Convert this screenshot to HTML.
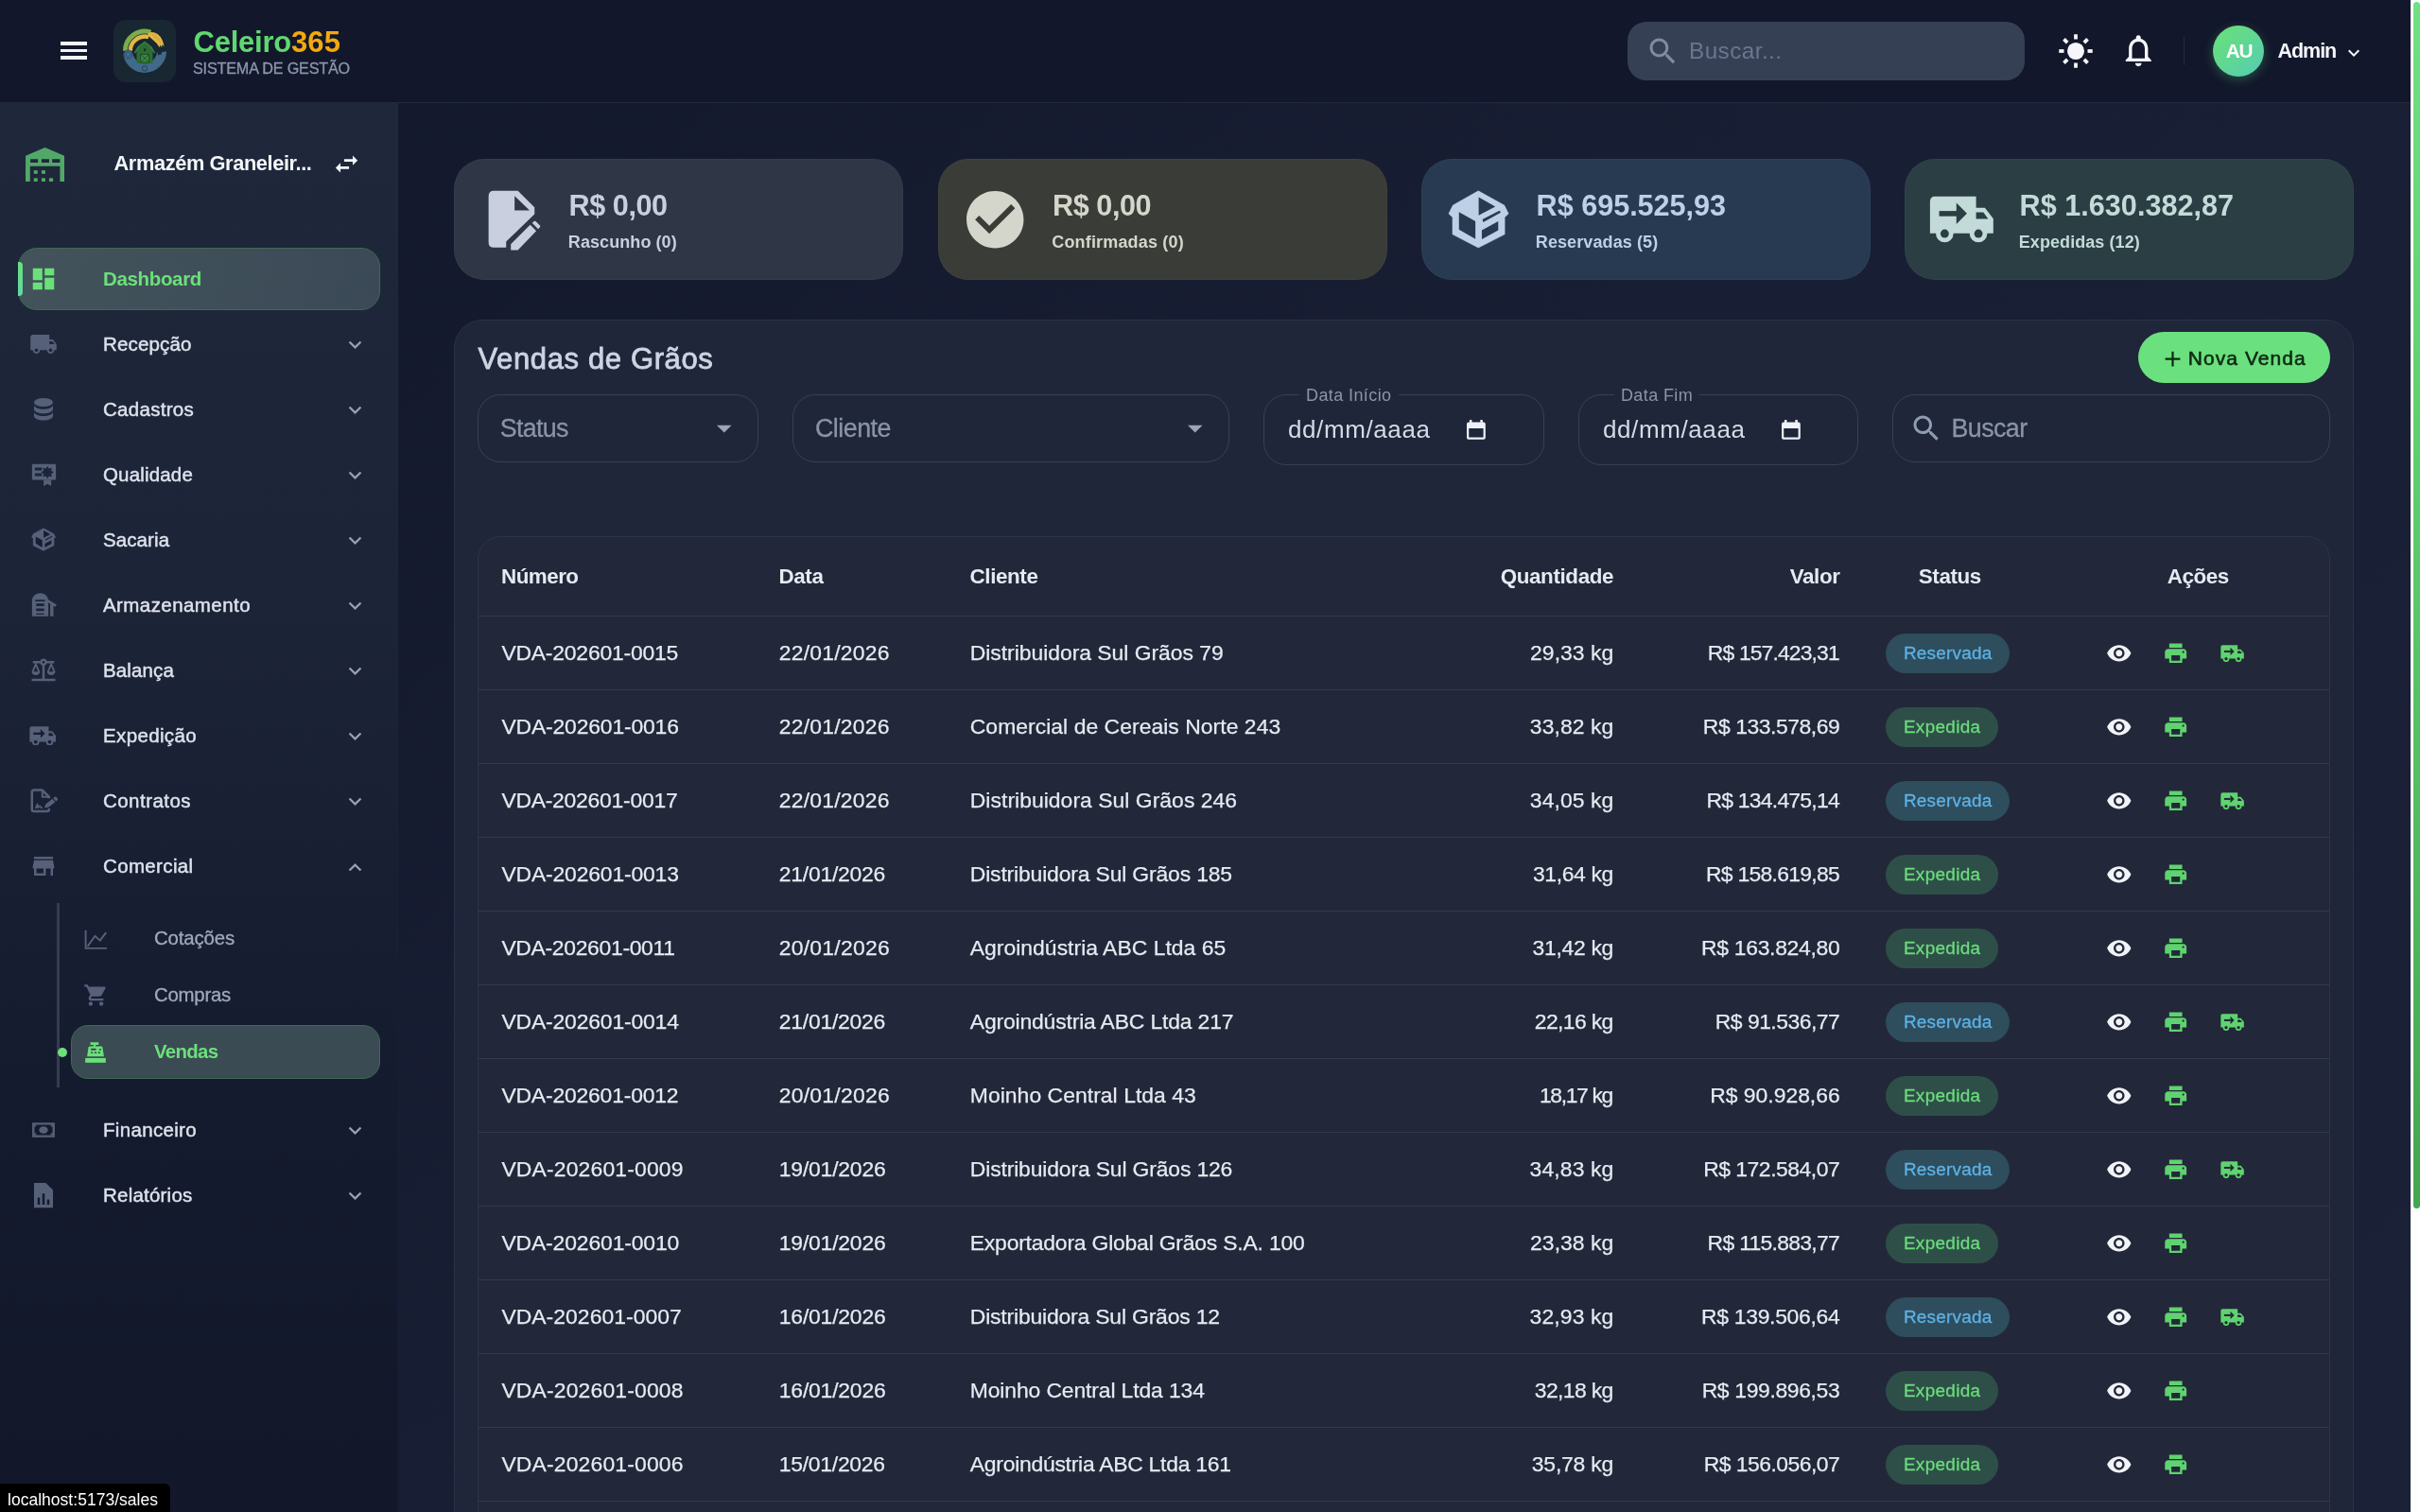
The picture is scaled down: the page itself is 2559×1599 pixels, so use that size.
<!DOCTYPE html><html><head><meta charset="utf-8"><title>Celeiro365</title><style>
*{box-sizing:border-box;margin:0;padding:0}
html,body{width:2559px;height:1599px;overflow:hidden;background:#141a2e}
body{font-family:"Liberation Sans",sans-serif;position:relative}
.t{display:block}
#root{position:absolute;left:0;top:0;width:2559px;height:1599px;overflow:hidden;will-change:transform}
</style></head><body><div id="root">
<div style="position:absolute;left:0px;top:0px;width:2549px;height:1599px;background:linear-gradient(135deg,#12172b 0%,#181e33 50%,#1b2136 100%);"></div>
<div style="position:absolute;left:0px;top:0px;width:2549px;height:108px;background:#12172b;"></div>
<div style="position:absolute;left:421px;top:108px;width:2128px;height:1px;background:#222a3d;"></div>
<div style="position:absolute;left:0px;top:108px;width:421px;height:1491px;background:linear-gradient(180deg,#1f283b 0%,#1c2438 35%,#151b2e 70%,#12172a 100%);border-right:1px solid rgba(255,255,255,.012);"></div>
<div style="position:absolute;left:63.8px;top:44.2px;width:28.3px;height:3.8px;background:#f1f3f8;"></div>
<div style="position:absolute;left:63.8px;top:51.6px;width:28.3px;height:3.8px;background:#f1f3f8;"></div>
<div style="position:absolute;left:63.8px;top:59.1px;width:28.3px;height:3.8px;background:#f1f3f8;"></div>
<div style="position:absolute;left:120px;top:21px;width:66px;height:66px;background:#182731;border-radius:13px;"></div>
<svg style="position:absolute;left:120.00px;top:21.00px;" width="66" height="66" viewBox="0 0 66 66"><path d="M51.09 33.43 A18.1 18.1 0 0 1 15.17 35.94" fill="none" stroke="#41698a" stroke-width="10" stroke-linecap="butt"/><path d="M44 33 l2.500 1.200 .8 3.500 1.800-1.500 .9 1.300 1.300-3.500 2.500-.6 0-3z" fill="#182731"/><path d="M12.40 32.80 A20.6 20.6 0 0 1 39.37 13.21" fill="none" stroke="#7cab4a" stroke-width="5" stroke-linecap="butt"/><path d="M17.80 32.80 A15.2 15.2 0 0 1 37.19 18.19" fill="none" stroke="#e2b843" stroke-width="4.3" stroke-linecap="butt"/><path d="M36.300 14.200 Q41 11.300 47 15.200 Q52.300 19.500 53.600 28.600 L51.600 26 L51 29.300 L49.300 26.600 L48.600 29.200 Q46 24.200 41.700 21.200 Q39.500 19.500 37.300 17.600 Z" fill="#e2b843"/><path d="M40.500 14.500 l4 5.500 M44 15.500 l3.300 6.500 M47.500 18.500 l2.300 6.500" stroke="#b8902c" stroke-width=".5" fill="none"/><path d="M24.500 45.700 V33 q0-2.500 2-4.500 l6.500-4.700 6.500 4.700 q2 2 2 4.500 V45.700 l-8.500 1.200z" fill="#2d6b35"/><path d="M22.500 35.200 l4-6.700 6.500-5 6.500 5 4 6.700" fill="none" stroke="#3b8342" stroke-width="1.500" stroke-linejoin="round"/><rect x="28.700" y="36.400" width="8.800" height="8.600" fill="#3b8a44" stroke="#1d4a24" stroke-width=".9"/><path d="M28.700 36.400 l8.800 8.600 M37.500 36.400 l-8.800 8.600" stroke="#1d4a24" stroke-width=".9"/><rect x="32" y="30.300" width="2.200" height="2.600" rx=".6" fill="#16321b"/><circle cx="15.400" cy="36.400" r="4.400" fill="#41698a" stroke="#29475f" stroke-width=".9"/><circle cx="15.400" cy="36.400" r="2.100" fill="#4d7799" stroke="#29475f" stroke-width=".8"/><circle cx="33" cy="51.400" r="2.700" fill="#41698a" stroke="#1f3a4e" stroke-width=".9"/></svg>
<span id="logo1" class="t" style="position:absolute;top:24.80px;font-size:31px;line-height:40px;color:#5fd870;font-weight:700;white-space:nowrap;letter-spacing:-0.230px;left:204.5px;">Celeiro</span>
<span id="logo2" class="t" style="position:absolute;top:24.80px;font-size:31px;line-height:40px;color:#f2a90f;font-weight:700;white-space:nowrap;letter-spacing:0.089px;left:308px;">365</span>
<span id="logosub" class="t" style="position:absolute;top:61.50px;font-size:16.2px;line-height:21px;color:#8c97ae;font-weight:400;white-space:nowrap;letter-spacing:-0.183px;-webkit-text-stroke:0.3px #8c97ae;left:204px;">SISTEMA DE GESTÃO</span>
<div style="position:absolute;left:1721px;top:23px;width:420px;height:62px;background:#364055;border-radius:20px;"></div>
<svg style="position:absolute;left:1739.55px;top:35.55px;" width="36.5" height="36.5" viewBox="0 0 24 24" fill="#7f8ba2"><path d="M15.5 14h-.79l-.28-.27C15.41 12.59 16 11.11 16 9.5 16 5.91 13.09 3 9.5 3S3 5.91 3 9.5 5.91 16 9.5 16c1.61 0 3.09-.59 4.23-1.57l.27.28v.79l5 4.99L20.49 19l-4.99-5zm-6 0C7.01 14 5 11.99 5 9.5S7.01 5 9.5 5 14 7.01 14 9.5 11.99 14 9.5 14z"/></svg>
<span id="hsearch" class="t" style="position:absolute;top:37.50px;font-size:24.3px;line-height:32px;color:#6a768e;font-weight:400;white-space:nowrap;letter-spacing:0.441px;left:1786px;">Buscar...</span>
<svg style="position:absolute;left:2176.30px;top:34.80px;" width="38" height="38" viewBox="0 0 24 24"><g fill="#f4f6fa"><circle cx="12" cy="12" r="5.700"/><rect x="10.800" y="0.800" width="2.400" height="3.300" transform="rotate(0 12 12)"/><rect x="10.800" y="0.800" width="2.400" height="3.300" transform="rotate(45 12 12)"/><rect x="10.800" y="0.800" width="2.400" height="3.300" transform="rotate(90 12 12)"/><rect x="10.800" y="0.800" width="2.400" height="3.300" transform="rotate(135 12 12)"/><rect x="10.800" y="0.800" width="2.400" height="3.300" transform="rotate(180 12 12)"/><rect x="10.800" y="0.800" width="2.400" height="3.300" transform="rotate(225 12 12)"/><rect x="10.800" y="0.800" width="2.400" height="3.300" transform="rotate(270 12 12)"/><rect x="10.800" y="0.800" width="2.400" height="3.300" transform="rotate(315 12 12)"/></g></svg>
<svg style="position:absolute;left:2241.05px;top:33.35px;" width="40.5" height="40.5" viewBox="0 0 24 24" fill="#f4f6fa"><path d="M12 22c1.1 0 2-.9 2-2h-4c0 1.1.9 2 2 2zm6-6v-5c0-3.07-1.63-5.64-4.5-6.32V4c0-.83-.67-1.5-1.5-1.5s-1.5.67-1.5 1.5v.68C7.64 5.36 6 7.92 6 11v5l-2 2v1h16v-1l-2-2zm-2 1H8v-6c0-2.48 1.51-4.5 4-4.5s4 2.02 4 4.5v6z"/></svg>
<div style="position:absolute;left:2309px;top:39px;width:1px;height:30px;background:#262d41;"></div>
<div style="position:absolute;left:2339.5px;top:27px;width:54px;height:54px;border-radius:50%;background:linear-gradient(135deg,#6be07a 0%,#62d98c 40%,#54ccb4 100%);box-shadow:0 3px 12px rgba(90,220,140,.3);"></div>
<span id="au" class="t" style="position:absolute;top:40.30px;font-size:20.8px;line-height:27px;color:#ffffff;font-weight:700;white-space:nowrap;letter-spacing:-1.323px;left:2368.2px;transform:translateX(-50%);margin-left:-0.66px;">AU</span>
<span id="admin" class="t" style="position:absolute;top:39.60px;font-size:21.5px;line-height:28px;color:#f4f6fa;font-weight:700;white-space:nowrap;letter-spacing:-1.038px;left:2408.5px;">Admin</span>
<svg style="position:absolute;left:2476.50px;top:43.50px;" width="24" height="24" viewBox="0 0 24 24" fill="#f4f6fa"><path d="M16.59 8.59 12 13.17 7.41 8.59 6 10l6 6 6-6z"/></svg>
<svg style="position:absolute;left:27.25px;top:155.90px;" width="41.2" height="36" viewBox="0 0 226 198"><path fill="#52a869" fill-rule="evenodd" d="M0 48L113 0l113 48v150h-26v-90H26v90H0zM28 68v20h44V68zm65 0v20h44V68zm62 0v20h45V68z"/><g fill="#52a869"><rect x="48" y="133" width="22" height="20"/><rect x="93" y="133" width="22" height="20"/><rect x="48" y="178" width="22" height="20"/><rect x="93" y="178" width="22" height="20"/><rect x="137" y="178" width="23" height="20"/></g></svg>
<span id="wh" class="t" style="position:absolute;top:158.90px;font-size:21.8px;line-height:28px;color:#f4f6fa;font-weight:700;white-space:nowrap;letter-spacing:-0.394px;left:120.5px;">Armazém Graneleir...</span>
<svg style="position:absolute;left:350.50px;top:158.00px;" width="31" height="31" viewBox="0 0 24 24" fill="#f4f6fa"><path d="M6.99 11 3 15l3.99 4v-3H14v-2H6.99v-3zM21 9l-3.99-4v3H10v2h7.01v3L21 9z"/></svg>
<div style="position:absolute;left:24px;top:240px;width:376px;height:1px;background:rgba(255,255,255,.012);"></div>
<div style="position:absolute;left:18.5px;top:262px;width:383.5px;height:65.5px;background:linear-gradient(100deg,#42535b 0%,#3f4f59 50%,#3b4957 100%);border:1px solid #3f6853;border-radius:20px;"></div>
<div style="position:absolute;left:18.5px;top:277px;width:5px;height:36px;background:linear-gradient(180deg,#6be07a,#5fd8a8);border-radius:0 4px 4px 0;"></div>
<svg style="position:absolute;left:30.50px;top:280.00px;" width="30" height="30" viewBox="0 0 24 24" fill="#6be07a"><path d="M3 13h8V3H3v10zm0 8h8v-6H3v6zm10 0h8V11h-8v10zm0-18v6h8V3h-8z"/></svg>
<span id="m_dash" class="t" style="position:absolute;top:280.50px;font-size:20.5px;line-height:27px;color:#6be07a;font-weight:700;white-space:nowrap;letter-spacing:-0.342px;left:109px;">Dashboard</span>
<svg style="position:absolute;left:30.50px;top:349.00px;" width="30" height="30" viewBox="0 0 24 24" fill="#566079"><path d="M20 8h-3V4H3c-1.1 0-2 .9-2 2v11h2c0 1.66 1.34 3 3 3s3-1.34 3-3h6c0 1.66 1.34 3 3 3s3-1.34 3-3h2v-5l-3-4zM6 18.5c-.83 0-1.5-.67-1.5-1.5s.67-1.5 1.5-1.5 1.5.67 1.5 1.5-.67 1.5-1.5 1.5zm13.5-9 1.96 2.5H17V9.5h2.5zm-1.5 9c-.83 0-1.5-.67-1.5-1.5s.67-1.5 1.5-1.5 1.5.67 1.5 1.5-.67 1.5-1.5 1.5z"/></svg>
<span id="m_Recepção" class="t" style="position:absolute;top:349.50px;font-size:20.5px;line-height:27px;color:#dde2ec;font-weight:400;white-space:nowrap;letter-spacing:0.148px;-webkit-text-stroke:0.45px #dde2ec;left:109px;">Recepção</span>
<svg style="position:absolute;left:362.10px;top:351.20px;" width="27" height="27" viewBox="0 0 24 24" fill="#97a1b6"><path d="M16.59 8.59 12 13.17 7.41 8.59 6 10l6 6 6-6z"/></svg>
<svg style="position:absolute;left:30.50px;top:418.00px;" width="30" height="30" viewBox="0 0 24 24"><g fill="#566079"><ellipse cx="12" cy="6" rx="8" ry="3.6"/><path d="M4 8.2v3.6c0 2 3.6 3.6 8 3.6s8-1.6 8-3.6V8.2c0 2-3.6 3.6-8 3.6S4 10.200 4 8.200z"/><path d="M4 14v3.600c0 2 3.600 3.600 8 3.600s8-1.600 8-3.600V14c0 2-3.600 3.600-8 3.600S4 16 4 14z"/></g></svg>
<span id="m_Cadastros" class="t" style="position:absolute;top:418.50px;font-size:20.5px;line-height:27px;color:#dde2ec;font-weight:400;white-space:nowrap;letter-spacing:0.285px;-webkit-text-stroke:0.45px #dde2ec;left:109px;">Cadastros</span>
<svg style="position:absolute;left:362.10px;top:420.20px;" width="27" height="27" viewBox="0 0 24 24" fill="#97a1b6"><path d="M16.59 8.59 12 13.17 7.41 8.59 6 10l6 6 6-6z"/></svg>
<svg style="position:absolute;left:30.50px;top:487.00px;" width="30" height="30" viewBox="0 0 24 24"><g fill="#566079"><path fill-rule="evenodd" d="M3.300 2.900h18.200q1 0 1 1v11.400q0 1-1 1H3.300q-1 0-1-1V3.900q0-1 1-1zM4.700 6h5.900v2.300H4.700zM4.700 10.700h5.900v2.400H4.700zM15.30 4.70L16.64 6.77L19.05 6.25L18.53 8.66L20.60 10.00L18.53 11.34L19.05 13.75L16.64 13.23L15.30 15.30L13.96 13.23L11.55 13.75L12.07 11.34L10.00 10.00L12.07 8.66L11.55 6.25L13.96 6.77z"/><path d="M12.100 16.300V21.600L15.300 19.700L18.500 21.600V16.300z"/></g></svg>
<span id="m_Qualidade" class="t" style="position:absolute;top:487.50px;font-size:20.5px;line-height:27px;color:#dde2ec;font-weight:400;white-space:nowrap;letter-spacing:0.170px;-webkit-text-stroke:0.45px #dde2ec;left:109px;">Qualidade</span>
<svg style="position:absolute;left:362.10px;top:489.20px;" width="27" height="27" viewBox="0 0 24 24" fill="#97a1b6"><path d="M16.59 8.59 12 13.17 7.41 8.59 6 10l6 6 6-6z"/></svg>
<svg style="position:absolute;left:32.80px;top:558.20px" width="26.2" height="25" viewBox="0 0 525 500"><path d="M260 7L482 130L518 202L485 232V378L260 492L40 378V232L7 202L43 130z" fill="#566079" stroke="#566079" stroke-width="4" stroke-linejoin="round"/><g fill="#181e32"><path d="M263 60V215L405 142z"/><path d="M295 250L440 175L452 192L302 275z"/><path d="M95 188L235 267V418L95 337z"/><path d="M290 342L430 267V342L290 420z"/></g></svg>
<span id="m_Sacaria" class="t" style="position:absolute;top:556.50px;font-size:20.5px;line-height:27px;color:#dde2ec;font-weight:400;white-space:nowrap;letter-spacing:0.098px;-webkit-text-stroke:0.45px #dde2ec;left:109px;">Sacaria</span>
<svg style="position:absolute;left:362.10px;top:558.20px;" width="27" height="27" viewBox="0 0 24 24" fill="#97a1b6"><path d="M16.59 8.59 12 13.17 7.41 8.59 6 10l6 6 6-6z"/></svg>
<svg style="position:absolute;left:30.50px;top:625.00px;" width="30" height="30" viewBox="0 0 24 24"><g fill="#566079"><path fill-rule="evenodd" d="M2.300 21.300V8.500c0-4 3-6.800 6.900-6.800s6.900 2.800 6.900 6.800v12.800zM5 7.300v1.400h8.400V7.300zM5.800 10.500v2.200h6.800v-2.200zM5.800 14.800v2.200h6.800v-2.200zM5.800 19v1h6.800v-1z"/><path d="M14.500 6.400l8.600 5.200-1 1.700-1.700-1v9h-2.700v-10.600l-3.200-2z"/></g></svg>
<span id="m_Armazenamento" class="t" style="position:absolute;top:625.50px;font-size:20.5px;line-height:27px;color:#dde2ec;font-weight:400;white-space:nowrap;letter-spacing:0.429px;-webkit-text-stroke:0.45px #dde2ec;left:109px;">Armazenamento</span>
<svg style="position:absolute;left:362.10px;top:627.20px;" width="27" height="27" viewBox="0 0 24 24" fill="#97a1b6"><path d="M16.59 8.59 12 13.17 7.41 8.59 6 10l6 6 6-6z"/></svg>
<svg style="position:absolute;left:30.50px;top:694.00px;" width="30" height="30" viewBox="0 0 24 24" fill="#566079"><path d="M13 7.83c.85-.3 1.53-.98 1.83-1.83H18l-3 7c0 1.66 1.57 3 3.5 3s3.5-1.34 3.5-3l-3-7h2V4h-6.17c-.41-1.17-1.52-2-2.83-2s-2.42.83-2.83 2H3v2h2l-3 7c0 1.66 1.57 3 3.5 3S9 14.66 9 13L6 6h3.17c.3.85.98 1.53 1.83 1.83V19H2v2h20v-2h-9V7.83zM20.37 13h-3.74l1.87-4.36L20.37 13zm-13 0H3.63L5.5 8.64 7.37 13zM12 6c-.55 0-1-.45-1-1s.45-1 1-1 1 .45 1 1-.45 1-1 1z"/></svg>
<span id="m_Balança" class="t" style="position:absolute;top:694.50px;font-size:20.5px;line-height:27px;color:#dde2ec;font-weight:400;white-space:nowrap;letter-spacing:0.129px;-webkit-text-stroke:0.45px #dde2ec;left:109px;">Balança</span>
<svg style="position:absolute;left:362.10px;top:696.20px;" width="27" height="27" viewBox="0 0 24 24" fill="#97a1b6"><path d="M16.59 8.59 12 13.17 7.41 8.59 6 10l6 6 6-6z"/></svg>
<svg style="position:absolute;left:31.30px;top:767.70px" width="28.4" height="20.5" viewBox="0 0 555 400"><g fill="#566079"><path d="M7 50Q7 5 50 5H400V102H475L547 195V320H7z"/><circle cx="132" cy="323" r="75"/><circle cx="420" cy="323" r="75"/></g><g fill="#181e32"><circle cx="132" cy="323" r="36"/><circle cx="420" cy="323" r="36"/><path d="M85 130H235V175H85z"/><path d="M232 60L322 152L232 242z"/><path d="M400 142H462L503 198H400z"/></g></svg>
<span id="m_Expedição" class="t" style="position:absolute;top:763.50px;font-size:20.5px;line-height:27px;color:#dde2ec;font-weight:400;white-space:nowrap;letter-spacing:0.363px;-webkit-text-stroke:0.45px #dde2ec;left:109px;">Expedição</span>
<svg style="position:absolute;left:362.10px;top:765.20px;" width="27" height="27" viewBox="0 0 24 24" fill="#97a1b6"><path d="M16.59 8.59 12 13.17 7.41 8.59 6 10l6 6 6-6z"/></svg>
<svg style="position:absolute;left:30.50px;top:832.00px;" width="30" height="30" viewBox="0 0 24 24"><g fill="none" stroke="#566079" stroke-width="2" stroke-linejoin="round" stroke-linecap="butt"><path d="M16.700 18.300V18.900q0 1.800-1.800 1.800H4q-1.800 0-1.800-1.800V4.650q0-1.800 1.800-1.800H11L16.700 8.600V9.800"/><path d="M11 3.300V8.600H16.300" stroke-width="1.600"/><path d="M5.300 18.300l1.600-3.600.3 3.100 1.800-1.600.8 1.600h1.400" stroke-width="1.300"/></g><g fill="#566079" transform="translate(12.600 17.900) rotate(-38)"><path d="M0 0L3.200-1.750H10.300V1.750H3.200z"/><path d="M11.100-1.750h1.700q1 0 1 1v1.500q0 1-1 1h-1.700z"/></g></svg>
<span id="m_Contratos" class="t" style="position:absolute;top:832.50px;font-size:20.5px;line-height:27px;color:#dde2ec;font-weight:400;white-space:nowrap;letter-spacing:0.457px;-webkit-text-stroke:0.45px #dde2ec;left:109px;">Contratos</span>
<svg style="position:absolute;left:362.10px;top:834.20px;" width="27" height="27" viewBox="0 0 24 24" fill="#97a1b6"><path d="M16.59 8.59 12 13.17 7.41 8.59 6 10l6 6 6-6z"/></svg>
<svg style="position:absolute;left:30.50px;top:900.80px;" width="30" height="30" viewBox="0 0 24 24" fill="#566079"><path d="M20 4H4v2h16V4zm1 10v-2l-1-5H4l-1 5v2h1v6h10v-6h4v6h2v-6h1zm-9 4H6v-4h6v4z"/></svg>
<span id="m_Comercial" class="t" style="position:absolute;top:902.00px;font-size:20.5px;line-height:27px;color:#dde2ec;font-weight:400;white-space:nowrap;letter-spacing:0.358px;-webkit-text-stroke:0.45px #dde2ec;left:109px;">Comercial</span>
<svg style="position:absolute;left:362.10px;top:903.70px;" width="27" height="27" viewBox="0 0 24 24" fill="#97a1b6"><path d="m12 8-6 6 1.41 1.41L12 10.83l4.59 4.58L18 14z"/></svg>
<svg style="position:absolute;left:32.50px;top:1182.00px;" width="26" height="26" viewBox="0 0 24 24"><g fill="#566079"><path fill-rule="evenodd" d="M1 4.800h22v14.400H1zM3.200 7v10h17.600V7z"/><ellipse cx="12" cy="12" rx="4.300" ry="3.500"/><path d="M3 7h2.200a2.200 2.200 0 0 1-2.200 2.200zM21 7h-2.200a2.200 2.200 0 0 0 2.200 2.200zM3 17h2.200a2.200 2.200 0 0 0-2.200-2.200zM21 17h-2.200a2.200 2.200 0 0 1 2.200-2.200z"/></g></svg>
<span id="m_Financeiro" class="t" style="position:absolute;top:1180.50px;font-size:20.5px;line-height:27px;color:#dde2ec;font-weight:400;white-space:nowrap;letter-spacing:0.328px;-webkit-text-stroke:0.45px #dde2ec;left:109px;">Financeiro</span>
<svg style="position:absolute;left:362.10px;top:1182.20px;" width="27" height="27" viewBox="0 0 24 24" fill="#97a1b6"><path d="M16.59 8.59 12 13.17 7.41 8.59 6 10l6 6 6-6z"/></svg>
<svg style="position:absolute;left:30.50px;top:1249.00px;" width="30" height="30" viewBox="0 0 24 24"><g fill="#566079"><path d="M4 1.500h10l6 6v15H4zM7 14v6h2v-6zm4-3.500V20h2v-9.500zm4 5V20h2v-4.500z" fill-rule="evenodd"/></g></svg>
<span id="m_Relatórios" class="t" style="position:absolute;top:1249.50px;font-size:20.5px;line-height:27px;color:#dde2ec;font-weight:400;white-space:nowrap;letter-spacing:0.220px;-webkit-text-stroke:0.45px #dde2ec;left:109px;">Relatórios</span>
<svg style="position:absolute;left:362.10px;top:1251.20px;" width="27" height="27" viewBox="0 0 24 24" fill="#97a1b6"><path d="M16.59 8.59 12 13.17 7.41 8.59 6 10l6 6 6-6z"/></svg>
<div style="position:absolute;left:60px;top:955px;width:2.5px;height:195px;background:#343c50;"></div>
<div style="position:absolute;left:75px;top:1084px;width:327px;height:56.5px;background:#3a4b53;border:1px solid #3f6853;border-radius:18px;"></div>
<div style="position:absolute;left:60.5px;top:1107.5px;width:10px;height:10px;background:#6be07a;border-radius:50%;"></div>
<svg style="position:absolute;left:88.00px;top:979.50px;" width="26" height="26" viewBox="0 0 24 24"><g fill="none" stroke="#566079" stroke-width="1.800"><path d="M2.400 3.400V21.100H23.100"/><path d="M4.200 19.300L11.500 9.200L16.500 13.500L22.300 5.600" stroke-linejoin="miter"/></g></svg>
<span id="s_cot" class="t" style="position:absolute;top:979.00px;font-size:20.4px;line-height:27px;color:#9ea9bd;font-weight:400;white-space:nowrap;letter-spacing:-0.145px;-webkit-text-stroke:0.3px #9ea9bd;left:163px;">Cotações</span>
<svg style="position:absolute;left:87.50px;top:1039.00px;" width="27" height="27" viewBox="0 0 24 24" fill="#566079"><path d="M7 18c-1.1 0-1.99.9-1.99 2S5.9 22 7 22s2-.9 2-2-.9-2-2-2zM1 2v2h2l3.6 7.59-1.35 2.45c-.16.28-.25.61-.25.96 0 1.1.9 2 2 2h12v-2H7.42c-.14 0-.25-.11-.25-.25l.03-.12.9-1.63h7.45c.75 0 1.41-.41 1.75-1.03l3.58-6.49c.08-.14.12-.31.12-.48 0-.55-.45-1-1-1H5.21l-.94-2H1zm16 16c-1.1 0-1.99.9-1.99 2s.89 2 1.99 2 2-.9 2-2-.9-2-2-2z"/></svg>
<span id="s_com" class="t" style="position:absolute;top:1039.00px;font-size:20.4px;line-height:27px;color:#9ea9bd;font-weight:400;white-space:nowrap;letter-spacing:-0.246px;-webkit-text-stroke:0.3px #9ea9bd;left:163px;">Compras</span>
<svg style="position:absolute;left:88.00px;top:1099.50px;" width="26" height="26" viewBox="0 0 24 24"><g fill="#6be07a"><path d="M7 2h8v2.500h-3v1.500h5.500c.8 0 1.500.7 1.500 1.500l1.200 8.500H3.800L5 7.500C5 6.700 5.700 6 6.500 6H10V4.500H7zm.5 6v2h5V8zm8 .500v1.500h2V8.500zm-8 3v1.500h2v-1.500zm3.500 0v1.500h2v-1.500zm3.500 0v1.500h2v-1.500z" fill-rule="evenodd"/><path d="M2 17.500h20V22H2z"/></g></svg>
<span id="s_ven" class="t" style="position:absolute;top:1099.00px;font-size:20.4px;line-height:27px;color:#6be07a;font-weight:700;white-space:nowrap;letter-spacing:-0.654px;left:163px;">Vendas</span>
<div style="position:absolute;left:480px;top:168px;width:475px;height:128px;background:#2f3646;border-radius:32px;border:1px solid rgba(255,255,255,.03);"></div>
<svg style="position:absolute;left:516.03px;top:201.3px" width="55.8" height="64.5" viewBox="0 0 450 520"><g fill="#c9cfdf"><path fill-rule="evenodd" d="M5 53Q5 5 50 5H255L397 148V206L155 440V490H50Q5 490 5 445zM227 50V173H355z"/><path d="M195 461L360 296L412 348L255 513H195z"/><path d="M377 280L393 266Q400 260 407 267L443 303Q450 310 443 317L428 333z"/></g></svg>
<span id="cv480" class="t" style="position:absolute;top:196.70px;font-size:30.6px;line-height:40px;color:#c9cfdf;font-weight:700;white-space:nowrap;letter-spacing:-0.451px;left:601.6px;">R$ 0,00</span>
<span id="cl480" class="t" style="position:absolute;top:244.60px;font-size:18px;line-height:23px;color:#c9cfdf;font-weight:700;white-space:nowrap;letter-spacing:0.082px;left:600.8px;">Rascunho (0)</span>
<div style="position:absolute;left:991.5px;top:168px;width:475px;height:128px;background:#3a3c38;border-radius:32px;border:1px solid rgba(255,255,255,.03);"></div>
<svg style="position:absolute;left:1016.25px;top:195.75px;" width="72.5" height="72.5" viewBox="0 0 24 24" fill="#d5d6cb"><path d="M12 2C6.48 2 2 6.48 2 12s4.48 10 10 10 10-4.48 10-10S17.52 2 12 2zm-2 15-5-5 1.41-1.41L10 14.17l7.59-7.59L19 8l-9 9z"/></svg>
<span id="cv991.5" class="t" style="position:absolute;top:196.70px;font-size:30.6px;line-height:40px;color:#d5d6cb;font-weight:700;white-space:nowrap;letter-spacing:-0.451px;left:1113.1px;">R$ 0,00</span>
<span id="cl991.5" class="t" style="position:absolute;top:244.60px;font-size:18px;line-height:23px;color:#d5d6cb;font-weight:700;white-space:nowrap;letter-spacing:0.165px;left:1112.3px;">Confirmadas (0)</span>
<div style="position:absolute;left:1503px;top:168px;width:475px;height:128px;background:#273a52;border-radius:32px;border:1px solid rgba(255,255,255,.03);"></div>
<svg style="position:absolute;left:1531.07px;top:201.07px" width="65.1" height="62" viewBox="0 0 525 500"><path d="M260 7L482 130L518 202L485 232V378L260 492L40 378V232L7 202L43 130z" fill="#bdd0e6" stroke="#bdd0e6" stroke-width="4" stroke-linejoin="round"/><g fill="#273a52"><path d="M263 60V215L405 142z"/><path d="M295 250L440 175L452 192L302 275z"/><path d="M95 188L235 267V418L95 337z"/><path d="M290 342L430 267V342L290 420z"/></g></svg>
<span id="cv1503" class="t" style="position:absolute;top:196.70px;font-size:30.6px;line-height:40px;color:#bdd0e6;font-weight:700;white-space:nowrap;letter-spacing:-0.018px;left:1624.6px;">R$ 695.525,93</span>
<span id="cl1503" class="t" style="position:absolute;top:244.60px;font-size:18px;line-height:23px;color:#bdd0e6;font-weight:700;white-space:nowrap;letter-spacing:0.102px;left:1623.8px;">Reservadas (5)</span>
<div style="position:absolute;left:2014px;top:168px;width:475px;height:128px;background:#2a3e44;border-radius:32px;border:1px solid rgba(255,255,255,.03);"></div>
<svg style="position:absolute;left:2039.95px;top:207.27px" width="68.8" height="49.6" viewBox="0 0 555 400"><g fill="#c3dbd8"><path d="M7 50Q7 5 50 5H400V102H475L547 195V320H7z"/><circle cx="132" cy="323" r="75"/><circle cx="420" cy="323" r="75"/></g><g fill="#2a3e44"><circle cx="132" cy="323" r="36"/><circle cx="420" cy="323" r="36"/><path d="M85 130H235V175H85z"/><path d="M232 60L322 152L232 242z"/><path d="M400 142H462L503 198H400z"/></g></svg>
<span id="cv2014" class="t" style="position:absolute;top:196.70px;font-size:30.6px;line-height:40px;color:#c3dbd8;font-weight:700;white-space:nowrap;letter-spacing:0.017px;left:2135.6px;">R$ 1.630.382,87</span>
<span id="cl2014" class="t" style="position:absolute;top:244.60px;font-size:18px;line-height:23px;color:#c3dbd8;font-weight:700;white-space:nowrap;letter-spacing:0.068px;left:2134.8px;">Expedidas (12)</span>
<div style="position:absolute;left:480px;top:338px;width:2009px;height:1400px;background:#1f263a;border:1px solid #2a3247;border-radius:30px;"></div>
<span id="title" class="t" style="position:absolute;top:359.60px;font-size:31px;line-height:40px;color:#cdd4e2;font-weight:400;white-space:nowrap;letter-spacing:0.629px;-webkit-text-stroke:0.8px #cdd4e2;left:505.5px;">Vendas de Grãos</span>
<div style="position:absolute;left:2261px;top:351px;width:203px;height:54px;background:#6be07e;border-radius:27px;"></div>
<svg style="position:absolute;left:2284.00px;top:365.50px;" width="27" height="27" viewBox="0 0 24 24" fill="#0f2a15"><path d="M19 13h-6v6h-2v-6H5v-2h6V5h2v6h6v2z"/></svg>
<span id="btn" class="t" style="position:absolute;top:365.00px;font-size:21px;line-height:27px;color:#0f2a15;font-weight:400;white-space:nowrap;letter-spacing:1.056px;-webkit-text-stroke:0.6px #0f2a15;left:2313.8px;">Nova Venda</span>
<div style="position:absolute;left:505px;top:417px;width:296.5px;height:71.5px;border:1px solid #364055;border-radius:24px;"></div>
<span id="f_status" class="t" style="position:absolute;top:435.70px;font-size:26.8px;line-height:35px;color:#8a94a8;font-weight:400;white-space:nowrap;letter-spacing:-0.661px;-webkit-text-stroke:0.3px #8a94a8;left:528.7px;">Status</span>
<svg style="position:absolute;left:746.55px;top:434.05px;" width="37.5" height="37.5" viewBox="0 0 24 24" fill="#9aa4b8"><path d="m7 10 5 5 5-5z"/></svg>
<div style="position:absolute;left:838px;top:417px;width:461.5px;height:71.5px;border:1px solid #364055;border-radius:24px;"></div>
<span id="f_cliente" class="t" style="position:absolute;top:435.70px;font-size:26.8px;line-height:35px;color:#8a94a8;font-weight:400;white-space:nowrap;letter-spacing:-0.489px;-webkit-text-stroke:0.3px #8a94a8;left:862px;">Cliente</span>
<svg style="position:absolute;left:1245.05px;top:434.05px;" width="37.5" height="37.5" viewBox="0 0 24 24" fill="#9aa4b8"><path d="m7 10 5 5 5-5z"/></svg>
<div style="position:absolute;left:1336px;top:417px;width:296.5px;height:74.5px;border:1px solid #364055;border-radius:24px;"></div>
<div style="position:absolute;left:1374px;top:410px;width:104.5px;height:16px;background:#1f263a;"></div>
<span id="flData Início" class="t" style="position:absolute;top:406.70px;font-size:18px;line-height:23px;color:#8a94a8;font-weight:400;white-space:nowrap;letter-spacing:0.405px;left:1381px;">Data Início</span>
<span id="fdData Início" class="t" style="position:absolute;top:437.00px;font-size:26px;line-height:34px;color:#d5dae6;font-weight:400;white-space:nowrap;letter-spacing:0.597px;left:1362px;">dd/mm/aaaa</span>
<svg style="position:absolute;left:1551.1px;top:444.05px" width="19.8" height="20.8" viewBox="0 0 80 84"><path fill="#eef1f6" fill-rule="evenodd" d="M12 0h10v10h36V0h10v10h4q8 0 8 8v58q0 8-8 8H8q-8 0-8-8V18q0-8 8-8h4zM9 36v39h62V36z"/></svg>
<div style="position:absolute;left:1669px;top:417px;width:295.5px;height:74.5px;border:1px solid #364055;border-radius:24px;"></div>
<div style="position:absolute;left:1707px;top:410px;width:90px;height:16px;background:#1f263a;"></div>
<span id="flData Fim" class="t" style="position:absolute;top:406.70px;font-size:18px;line-height:23px;color:#8a94a8;font-weight:400;white-space:nowrap;letter-spacing:0.373px;left:1714px;">Data Fim</span>
<span id="fdData Fim" class="t" style="position:absolute;top:437.00px;font-size:26px;line-height:34px;color:#d5dae6;font-weight:400;white-space:nowrap;letter-spacing:0.597px;left:1695px;">dd/mm/aaaa</span>
<svg style="position:absolute;left:1884.1px;top:444.05px" width="19.8" height="20.8" viewBox="0 0 80 84"><path fill="#eef1f6" fill-rule="evenodd" d="M12 0h10v10h36V0h10v10h4q8 0 8 8v58q0 8-8 8H8q-8 0-8-8V18q0-8 8-8h4zM9 36v39h62V36z"/></svg>
<div style="position:absolute;left:2001px;top:417px;width:462.5px;height:71.5px;border:1px solid #364055;border-radius:24px;"></div>
<svg style="position:absolute;left:2019.00px;top:434.50px;" width="36" height="36" viewBox="0 0 24 24" fill="#8f9bb0"><path d="M15.5 14h-.79l-.28-.27C15.41 12.59 16 11.11 16 9.5 16 5.91 13.09 3 9.5 3S3 5.91 3 9.5 5.91 16 9.5 16c1.61 0 3.09-.59 4.23-1.57l.27.28v.79l5 4.99L20.49 19l-4.99-5zm-6 0C7.01 14 5 11.99 5 9.5S7.01 5 9.5 5 14 7.01 14 9.5 11.99 14 9.5 14z"/></svg>
<span id="f_buscar" class="t" style="position:absolute;top:435.70px;font-size:26.8px;line-height:35px;color:#8a94a8;font-weight:400;white-space:nowrap;letter-spacing:-0.568px;-webkit-text-stroke:0.3px #8a94a8;left:2063.5px;">Buscar</span>
<div style="position:absolute;left:505px;top:567px;width:1958.5px;height:1100px;background:#222839;border:1px solid #2c3447;border-radius:24px;"></div>
<span id="h1" class="t" style="position:absolute;top:595.00px;font-size:22.4px;line-height:29px;color:#e6eaf2;font-weight:700;white-space:nowrap;letter-spacing:-0.518px;left:530px;">Número</span>
<span id="h2" class="t" style="position:absolute;top:595.00px;font-size:22.4px;line-height:29px;color:#e6eaf2;font-weight:700;white-space:nowrap;letter-spacing:-0.387px;left:823.5px;">Data</span>
<span id="h3" class="t" style="position:absolute;top:595.00px;font-size:22.4px;line-height:29px;color:#e6eaf2;font-weight:700;white-space:nowrap;letter-spacing:-0.379px;left:1025.5px;">Cliente</span>
<span id="h4" class="t" style="position:absolute;top:595.00px;font-size:22.4px;line-height:29px;color:#e6eaf2;font-weight:700;white-space:nowrap;letter-spacing:-0.367px;right:852.87px;">Quantidade</span>
<span id="h5" class="t" style="position:absolute;top:595.00px;font-size:22.4px;line-height:29px;color:#e6eaf2;font-weight:700;white-space:nowrap;letter-spacing:-0.353px;right:613.35px;">Valor</span>
<span id="h6" class="t" style="position:absolute;top:595.00px;font-size:22.4px;line-height:29px;color:#e6eaf2;font-weight:700;white-space:nowrap;letter-spacing:-0.406px;left:2062px;transform:translateX(-50%);margin-left:-0.20px;">Status</span>
<span id="h7" class="t" style="position:absolute;top:595.00px;font-size:22.4px;line-height:29px;color:#e6eaf2;font-weight:700;white-space:nowrap;letter-spacing:-0.444px;left:2324.5px;transform:translateX(-50%);margin-left:-0.22px;">Ações</span>
<div style="position:absolute;left:506px;top:651px;width:1956.5px;height:1px;background:#323a4d;"></div>
<span id="r0a" class="t" style="position:absolute;top:675.00px;font-size:22.9px;line-height:30px;color:#e6eaf2;font-weight:400;white-space:nowrap;letter-spacing:-0.195px;-webkit-text-stroke:0.25px #e6eaf2;left:530.4px;">VDA-202601-0015</span>
<span id="r0b" class="t" style="position:absolute;top:675.00px;font-size:22.9px;line-height:30px;color:#e6eaf2;font-weight:400;white-space:nowrap;letter-spacing:0.222px;-webkit-text-stroke:0.25px #e6eaf2;left:823.8px;">22/01/2026</span>
<span id="r0c" class="t" style="position:absolute;top:675.00px;font-size:22.9px;line-height:30px;color:#e6eaf2;font-weight:400;white-space:nowrap;letter-spacing:-0.025px;-webkit-text-stroke:0.25px #e6eaf2;left:1025.8px;">Distribuidora Sul Grãos 79</span>
<span id="r0d" class="t" style="position:absolute;top:675.00px;font-size:22.9px;line-height:30px;color:#e6eaf2;font-weight:400;white-space:nowrap;letter-spacing:0.059px;-webkit-text-stroke:0.25px #e6eaf2;right:852.64px;">29,33 kg</span>
<span id="r0e" class="t" style="position:absolute;top:675.00px;font-size:22.9px;line-height:30px;color:#e6eaf2;font-weight:400;white-space:nowrap;letter-spacing:-0.861px;-webkit-text-stroke:0.25px #e6eaf2;right:614.16px;">R$ 157.423,31</span>
<div style="position:absolute;left:1994px;top:670px;width:131px;height:41.5px;background:#2e4d5d;border-radius:21px;"></div>
<span id="r0f" class="t" style="position:absolute;top:678.10px;font-size:18.9px;line-height:25px;color:#5db2e6;font-weight:400;white-space:nowrap;letter-spacing:0.238px;-webkit-text-stroke:0.3px #5db2e6;left:2059.6px;transform:translateX(-50%);margin-left:0.12px;">Reservada</span>
<svg style="position:absolute;left:2226.70px;top:676.90px;" width="27.6" height="27.6" viewBox="0 0 24 24" fill="#f1f3f8"><path d="M12 4.5C7 4.5 2.73 7.61 1 12c1.73 4.39 6 7.5 11 7.5s9.27-3.11 11-7.5c-1.73-4.39-6-7.5-11-7.5zM12 17c-2.76 0-5-2.24-5-5s2.24-5 5-5 5 2.24 5 5-2.24 5-5 5zm0-8c-1.66 0-3 1.34-3 3s1.34 3 3 3 3-1.34 3-3-1.34-3-3-3z"/></svg>
<svg style="position:absolute;left:2286.90px;top:677.30px;" width="27.4" height="27.4" viewBox="0 0 24 24" fill="#5fd36f"><path d="M19 8H5c-1.66 0-3 1.34-3 3v6h4v4h12v-4h4v-6c0-1.66-1.34-3-3-3zm-3 11H8v-5h8v5zm3-7c-.55 0-1-.45-1-1s.45-1 1-1 1 .45 1 1-.45 1-1 1zm-1-9H6v4h12V3z"/></svg>
<svg style="position:absolute;left:2347.80px;top:681.90px" width="25.2" height="18.2" viewBox="0 0 555 400"><g fill="#5fd36f"><path d="M7 50Q7 5 50 5H400V102H475L547 195V320H7z"/><circle cx="132" cy="323" r="75"/><circle cx="420" cy="323" r="75"/></g><g fill="#222839"><circle cx="132" cy="323" r="36"/><circle cx="420" cy="323" r="36"/><path d="M85 130H235V175H85z"/><path d="M232 60L322 152L232 242z"/><path d="M400 142H462L503 198H400z"/></g></svg>
<div style="position:absolute;left:506px;top:729px;width:1956.5px;height:1px;background:#323a4d;"></div>
<span id="r1a" class="t" style="position:absolute;top:753.00px;font-size:22.9px;line-height:30px;color:#e6eaf2;font-weight:400;white-space:nowrap;letter-spacing:-0.148px;-webkit-text-stroke:0.25px #e6eaf2;left:530.4px;">VDA-202601-0016</span>
<span id="r1b" class="t" style="position:absolute;top:753.00px;font-size:22.9px;line-height:30px;color:#e6eaf2;font-weight:400;white-space:nowrap;letter-spacing:0.222px;-webkit-text-stroke:0.25px #e6eaf2;left:823.8px;">22/01/2026</span>
<span id="r1c" class="t" style="position:absolute;top:753.00px;font-size:22.9px;line-height:30px;color:#e6eaf2;font-weight:400;white-space:nowrap;letter-spacing:0.047px;-webkit-text-stroke:0.25px #e6eaf2;left:1025.8px;">Comercial de Cereais Norte 243</span>
<span id="r1d" class="t" style="position:absolute;top:753.00px;font-size:22.9px;line-height:30px;color:#e6eaf2;font-weight:400;white-space:nowrap;letter-spacing:0.096px;-webkit-text-stroke:0.25px #e6eaf2;right:852.60px;">33,82 kg</span>
<span id="r1e" class="t" style="position:absolute;top:753.00px;font-size:22.9px;line-height:30px;color:#e6eaf2;font-weight:400;white-space:nowrap;letter-spacing:-0.445px;-webkit-text-stroke:0.25px #e6eaf2;right:613.75px;">R$ 133.578,69</span>
<div style="position:absolute;left:1994px;top:748px;width:119px;height:41.5px;background:#2e4f48;border-radius:21px;"></div>
<span id="r1f" class="t" style="position:absolute;top:756.10px;font-size:18.9px;line-height:25px;color:#6bdc7c;font-weight:400;white-space:nowrap;letter-spacing:0.340px;-webkit-text-stroke:0.3px #6bdc7c;left:2053.5px;transform:translateX(-50%);margin-left:0.17px;">Expedida</span>
<svg style="position:absolute;left:2226.70px;top:754.90px;" width="27.6" height="27.6" viewBox="0 0 24 24" fill="#f1f3f8"><path d="M12 4.5C7 4.5 2.73 7.61 1 12c1.73 4.39 6 7.5 11 7.5s9.27-3.11 11-7.5c-1.73-4.39-6-7.5-11-7.5zM12 17c-2.76 0-5-2.24-5-5s2.24-5 5-5 5 2.24 5 5-2.24 5-5 5zm0-8c-1.66 0-3 1.34-3 3s1.34 3 3 3 3-1.34 3-3-1.34-3-3-3z"/></svg>
<svg style="position:absolute;left:2286.90px;top:755.30px;" width="27.4" height="27.4" viewBox="0 0 24 24" fill="#5fd36f"><path d="M19 8H5c-1.66 0-3 1.34-3 3v6h4v4h12v-4h4v-6c0-1.66-1.34-3-3-3zm-3 11H8v-5h8v5zm3-7c-.55 0-1-.45-1-1s.45-1 1-1 1 .45 1 1-.45 1-1 1zm-1-9H6v4h12V3z"/></svg>
<div style="position:absolute;left:506px;top:807px;width:1956.5px;height:1px;background:#323a4d;"></div>
<span id="r2a" class="t" style="position:absolute;top:831.00px;font-size:22.9px;line-height:30px;color:#e6eaf2;font-weight:400;white-space:nowrap;letter-spacing:-0.242px;-webkit-text-stroke:0.25px #e6eaf2;left:530.4px;">VDA-202601-0017</span>
<span id="r2b" class="t" style="position:absolute;top:831.00px;font-size:22.9px;line-height:30px;color:#e6eaf2;font-weight:400;white-space:nowrap;letter-spacing:0.222px;-webkit-text-stroke:0.25px #e6eaf2;left:823.8px;">22/01/2026</span>
<span id="r2c" class="t" style="position:absolute;top:831.00px;font-size:22.9px;line-height:30px;color:#e6eaf2;font-weight:400;white-space:nowrap;letter-spacing:0.041px;-webkit-text-stroke:0.25px #e6eaf2;left:1025.8px;">Distribuidora Sul Grãos 246</span>
<span id="r2d" class="t" style="position:absolute;top:831.00px;font-size:22.9px;line-height:30px;color:#e6eaf2;font-weight:400;white-space:nowrap;letter-spacing:0.096px;-webkit-text-stroke:0.25px #e6eaf2;right:852.60px;">34,05 kg</span>
<span id="r2e" class="t" style="position:absolute;top:831.00px;font-size:22.9px;line-height:30px;color:#e6eaf2;font-weight:400;white-space:nowrap;letter-spacing:-0.738px;-webkit-text-stroke:0.25px #e6eaf2;right:614.04px;">R$ 134.475,14</span>
<div style="position:absolute;left:1994px;top:826px;width:131px;height:41.5px;background:#2e4d5d;border-radius:21px;"></div>
<span id="r2f" class="t" style="position:absolute;top:834.10px;font-size:18.9px;line-height:25px;color:#5db2e6;font-weight:400;white-space:nowrap;letter-spacing:0.238px;-webkit-text-stroke:0.3px #5db2e6;left:2059.6px;transform:translateX(-50%);margin-left:0.12px;">Reservada</span>
<svg style="position:absolute;left:2226.70px;top:832.90px;" width="27.6" height="27.6" viewBox="0 0 24 24" fill="#f1f3f8"><path d="M12 4.5C7 4.5 2.73 7.61 1 12c1.73 4.39 6 7.5 11 7.5s9.27-3.11 11-7.5c-1.73-4.39-6-7.5-11-7.5zM12 17c-2.76 0-5-2.24-5-5s2.24-5 5-5 5 2.24 5 5-2.24 5-5 5zm0-8c-1.66 0-3 1.34-3 3s1.34 3 3 3 3-1.34 3-3-1.34-3-3-3z"/></svg>
<svg style="position:absolute;left:2286.90px;top:833.30px;" width="27.4" height="27.4" viewBox="0 0 24 24" fill="#5fd36f"><path d="M19 8H5c-1.66 0-3 1.34-3 3v6h4v4h12v-4h4v-6c0-1.66-1.34-3-3-3zm-3 11H8v-5h8v5zm3-7c-.55 0-1-.45-1-1s.45-1 1-1 1 .45 1 1-.45 1-1 1zm-1-9H6v4h12V3z"/></svg>
<svg style="position:absolute;left:2347.80px;top:837.90px" width="25.2" height="18.2" viewBox="0 0 555 400"><g fill="#5fd36f"><path d="M7 50Q7 5 50 5H400V102H475L547 195V320H7z"/><circle cx="132" cy="323" r="75"/><circle cx="420" cy="323" r="75"/></g><g fill="#222839"><circle cx="132" cy="323" r="36"/><circle cx="420" cy="323" r="36"/><path d="M85 130H235V175H85z"/><path d="M232 60L322 152L232 242z"/><path d="M400 142H462L503 198H400z"/></g></svg>
<div style="position:absolute;left:506px;top:885px;width:1956.5px;height:1px;background:#323a4d;"></div>
<span id="r3a" class="t" style="position:absolute;top:909.00px;font-size:22.9px;line-height:30px;color:#e6eaf2;font-weight:400;white-space:nowrap;letter-spacing:-0.148px;-webkit-text-stroke:0.25px #e6eaf2;left:530.4px;">VDA-202601-0013</span>
<span id="r3b" class="t" style="position:absolute;top:909.00px;font-size:22.9px;line-height:30px;color:#e6eaf2;font-weight:400;white-space:nowrap;letter-spacing:-0.228px;-webkit-text-stroke:0.25px #e6eaf2;left:823.8px;">21/01/2026</span>
<span id="r3c" class="t" style="position:absolute;top:909.00px;font-size:22.9px;line-height:30px;color:#e6eaf2;font-weight:400;white-space:nowrap;letter-spacing:-0.151px;-webkit-text-stroke:0.25px #e6eaf2;left:1025.8px;">Distribuidora Sul Grãos 185</span>
<span id="r3d" class="t" style="position:absolute;top:909.00px;font-size:22.9px;line-height:30px;color:#e6eaf2;font-weight:400;white-space:nowrap;letter-spacing:-0.341px;-webkit-text-stroke:0.25px #e6eaf2;right:853.04px;">31,64 kg</span>
<span id="r3e" class="t" style="position:absolute;top:909.00px;font-size:22.9px;line-height:30px;color:#e6eaf2;font-weight:400;white-space:nowrap;letter-spacing:-0.707px;-webkit-text-stroke:0.25px #e6eaf2;right:614.01px;">R$ 158.619,85</span>
<div style="position:absolute;left:1994px;top:904px;width:119px;height:41.5px;background:#2e4f48;border-radius:21px;"></div>
<span id="r3f" class="t" style="position:absolute;top:912.10px;font-size:18.9px;line-height:25px;color:#6bdc7c;font-weight:400;white-space:nowrap;letter-spacing:0.340px;-webkit-text-stroke:0.3px #6bdc7c;left:2053.5px;transform:translateX(-50%);margin-left:0.17px;">Expedida</span>
<svg style="position:absolute;left:2226.70px;top:910.90px;" width="27.6" height="27.6" viewBox="0 0 24 24" fill="#f1f3f8"><path d="M12 4.5C7 4.5 2.73 7.61 1 12c1.73 4.39 6 7.5 11 7.5s9.27-3.11 11-7.5c-1.73-4.39-6-7.5-11-7.5zM12 17c-2.76 0-5-2.24-5-5s2.24-5 5-5 5 2.24 5 5-2.24 5-5 5zm0-8c-1.66 0-3 1.34-3 3s1.34 3 3 3 3-1.34 3-3-1.34-3-3-3z"/></svg>
<svg style="position:absolute;left:2286.90px;top:911.30px;" width="27.4" height="27.4" viewBox="0 0 24 24" fill="#5fd36f"><path d="M19 8H5c-1.66 0-3 1.34-3 3v6h4v4h12v-4h4v-6c0-1.66-1.34-3-3-3zm-3 11H8v-5h8v5zm3-7c-.55 0-1-.45-1-1s.45-1 1-1 1 .45 1 1-.45 1-1 1zm-1-9H6v4h12V3z"/></svg>
<div style="position:absolute;left:506px;top:963px;width:1956.5px;height:1px;background:#323a4d;"></div>
<span id="r4a" class="t" style="position:absolute;top:987.00px;font-size:22.9px;line-height:30px;color:#e6eaf2;font-weight:400;white-space:nowrap;letter-spacing:-0.308px;-webkit-text-stroke:0.25px #e6eaf2;left:530.4px;">VDA-202601-0011</span>
<span id="r4b" class="t" style="position:absolute;top:987.00px;font-size:22.9px;line-height:30px;color:#e6eaf2;font-weight:400;white-space:nowrap;letter-spacing:0.252px;-webkit-text-stroke:0.25px #e6eaf2;left:823.8px;">20/01/2026</span>
<span id="r4c" class="t" style="position:absolute;top:987.00px;font-size:22.9px;line-height:30px;color:#e6eaf2;font-weight:400;white-space:nowrap;letter-spacing:0.025px;-webkit-text-stroke:0.25px #e6eaf2;left:1025.8px;">Agroindústria ABC Ltda 65</span>
<span id="r4d" class="t" style="position:absolute;top:987.00px;font-size:22.9px;line-height:30px;color:#e6eaf2;font-weight:400;white-space:nowrap;letter-spacing:-0.304px;-webkit-text-stroke:0.25px #e6eaf2;right:853.00px;">31,42 kg</span>
<span id="r4e" class="t" style="position:absolute;top:987.00px;font-size:22.9px;line-height:30px;color:#e6eaf2;font-weight:400;white-space:nowrap;letter-spacing:-0.299px;-webkit-text-stroke:0.25px #e6eaf2;right:613.60px;">R$ 163.824,80</span>
<div style="position:absolute;left:1994px;top:982px;width:119px;height:41.5px;background:#2e4f48;border-radius:21px;"></div>
<span id="r4f" class="t" style="position:absolute;top:990.10px;font-size:18.9px;line-height:25px;color:#6bdc7c;font-weight:400;white-space:nowrap;letter-spacing:0.340px;-webkit-text-stroke:0.3px #6bdc7c;left:2053.5px;transform:translateX(-50%);margin-left:0.17px;">Expedida</span>
<svg style="position:absolute;left:2226.70px;top:988.90px;" width="27.6" height="27.6" viewBox="0 0 24 24" fill="#f1f3f8"><path d="M12 4.5C7 4.5 2.73 7.61 1 12c1.73 4.39 6 7.5 11 7.5s9.27-3.11 11-7.5c-1.73-4.39-6-7.5-11-7.5zM12 17c-2.76 0-5-2.24-5-5s2.24-5 5-5 5 2.24 5 5-2.24 5-5 5zm0-8c-1.66 0-3 1.34-3 3s1.34 3 3 3 3-1.34 3-3-1.34-3-3-3z"/></svg>
<svg style="position:absolute;left:2286.90px;top:989.30px;" width="27.4" height="27.4" viewBox="0 0 24 24" fill="#5fd36f"><path d="M19 8H5c-1.66 0-3 1.34-3 3v6h4v4h12v-4h4v-6c0-1.66-1.34-3-3-3zm-3 11H8v-5h8v5zm3-7c-.55 0-1-.45-1-1s.45-1 1-1 1 .45 1 1-.45 1-1 1zm-1-9H6v4h12V3z"/></svg>
<div style="position:absolute;left:506px;top:1041px;width:1956.5px;height:1px;background:#323a4d;"></div>
<span id="r5a" class="t" style="position:absolute;top:1065.00px;font-size:22.9px;line-height:30px;color:#e6eaf2;font-weight:400;white-space:nowrap;letter-spacing:-0.148px;-webkit-text-stroke:0.25px #e6eaf2;left:530.4px;">VDA-202601-0014</span>
<span id="r5b" class="t" style="position:absolute;top:1065.00px;font-size:22.9px;line-height:30px;color:#e6eaf2;font-weight:400;white-space:nowrap;letter-spacing:-0.228px;-webkit-text-stroke:0.25px #e6eaf2;left:823.8px;">21/01/2026</span>
<span id="r5c" class="t" style="position:absolute;top:1065.00px;font-size:22.9px;line-height:30px;color:#e6eaf2;font-weight:400;white-space:nowrap;letter-spacing:-0.154px;-webkit-text-stroke:0.25px #e6eaf2;left:1025.8px;">Agroindústria ABC Ltda 217</span>
<span id="r5d" class="t" style="position:absolute;top:1065.00px;font-size:22.9px;line-height:30px;color:#e6eaf2;font-weight:400;white-space:nowrap;letter-spacing:-0.616px;-webkit-text-stroke:0.25px #e6eaf2;right:853.32px;">22,16 kg</span>
<span id="r5e" class="t" style="position:absolute;top:1065.00px;font-size:22.9px;line-height:30px;color:#e6eaf2;font-weight:400;white-space:nowrap;letter-spacing:-0.506px;-webkit-text-stroke:0.25px #e6eaf2;right:613.81px;">R$ 91.536,77</span>
<div style="position:absolute;left:1994px;top:1060px;width:131px;height:41.5px;background:#2e4d5d;border-radius:21px;"></div>
<span id="r5f" class="t" style="position:absolute;top:1068.10px;font-size:18.9px;line-height:25px;color:#5db2e6;font-weight:400;white-space:nowrap;letter-spacing:0.238px;-webkit-text-stroke:0.3px #5db2e6;left:2059.6px;transform:translateX(-50%);margin-left:0.12px;">Reservada</span>
<svg style="position:absolute;left:2226.70px;top:1066.90px;" width="27.6" height="27.6" viewBox="0 0 24 24" fill="#f1f3f8"><path d="M12 4.5C7 4.5 2.73 7.61 1 12c1.73 4.39 6 7.5 11 7.5s9.27-3.11 11-7.5c-1.73-4.39-6-7.5-11-7.5zM12 17c-2.76 0-5-2.24-5-5s2.24-5 5-5 5 2.24 5 5-2.24 5-5 5zm0-8c-1.66 0-3 1.34-3 3s1.34 3 3 3 3-1.34 3-3-1.34-3-3-3z"/></svg>
<svg style="position:absolute;left:2286.90px;top:1067.30px;" width="27.4" height="27.4" viewBox="0 0 24 24" fill="#5fd36f"><path d="M19 8H5c-1.66 0-3 1.34-3 3v6h4v4h12v-4h4v-6c0-1.66-1.34-3-3-3zm-3 11H8v-5h8v5zm3-7c-.55 0-1-.45-1-1s.45-1 1-1 1 .45 1 1-.45 1-1 1zm-1-9H6v4h12V3z"/></svg>
<svg style="position:absolute;left:2347.80px;top:1071.90px" width="25.2" height="18.2" viewBox="0 0 555 400"><g fill="#5fd36f"><path d="M7 50Q7 5 50 5H400V102H475L547 195V320H7z"/><circle cx="132" cy="323" r="75"/><circle cx="420" cy="323" r="75"/></g><g fill="#222839"><circle cx="132" cy="323" r="36"/><circle cx="420" cy="323" r="36"/><path d="M85 130H235V175H85z"/><path d="M232 60L322 152L232 242z"/><path d="M400 142H462L503 198H400z"/></g></svg>
<div style="position:absolute;left:506px;top:1119px;width:1956.5px;height:1px;background:#323a4d;"></div>
<span id="r6a" class="t" style="position:absolute;top:1143.00px;font-size:22.9px;line-height:30px;color:#e6eaf2;font-weight:400;white-space:nowrap;letter-spacing:-0.175px;-webkit-text-stroke:0.25px #e6eaf2;left:530.4px;">VDA-202601-0012</span>
<span id="r6b" class="t" style="position:absolute;top:1143.00px;font-size:22.9px;line-height:30px;color:#e6eaf2;font-weight:400;white-space:nowrap;letter-spacing:0.252px;-webkit-text-stroke:0.25px #e6eaf2;left:823.8px;">20/01/2026</span>
<span id="r6c" class="t" style="position:absolute;top:1143.00px;font-size:22.9px;line-height:30px;color:#e6eaf2;font-weight:400;white-space:nowrap;letter-spacing:0.051px;-webkit-text-stroke:0.25px #e6eaf2;left:1025.8px;">Moinho Central Ltda 43</span>
<span id="r6d" class="t" style="position:absolute;top:1143.00px;font-size:22.9px;line-height:30px;color:#e6eaf2;font-weight:400;white-space:nowrap;letter-spacing:-1.341px;-webkit-text-stroke:0.25px #e6eaf2;right:854.04px;">18,17 kg</span>
<span id="r6e" class="t" style="position:absolute;top:1143.00px;font-size:22.9px;line-height:30px;color:#e6eaf2;font-weight:400;white-space:nowrap;letter-spacing:0.003px;-webkit-text-stroke:0.25px #e6eaf2;right:613.30px;">R$ 90.928,66</span>
<div style="position:absolute;left:1994px;top:1138px;width:119px;height:41.5px;background:#2e4f48;border-radius:21px;"></div>
<span id="r6f" class="t" style="position:absolute;top:1146.10px;font-size:18.9px;line-height:25px;color:#6bdc7c;font-weight:400;white-space:nowrap;letter-spacing:0.340px;-webkit-text-stroke:0.3px #6bdc7c;left:2053.5px;transform:translateX(-50%);margin-left:0.17px;">Expedida</span>
<svg style="position:absolute;left:2226.70px;top:1144.90px;" width="27.6" height="27.6" viewBox="0 0 24 24" fill="#f1f3f8"><path d="M12 4.5C7 4.5 2.73 7.61 1 12c1.73 4.39 6 7.5 11 7.5s9.27-3.11 11-7.5c-1.73-4.39-6-7.5-11-7.5zM12 17c-2.76 0-5-2.24-5-5s2.24-5 5-5 5 2.24 5 5-2.24 5-5 5zm0-8c-1.66 0-3 1.34-3 3s1.34 3 3 3 3-1.34 3-3-1.34-3-3-3z"/></svg>
<svg style="position:absolute;left:2286.90px;top:1145.30px;" width="27.4" height="27.4" viewBox="0 0 24 24" fill="#5fd36f"><path d="M19 8H5c-1.66 0-3 1.34-3 3v6h4v4h12v-4h4v-6c0-1.66-1.34-3-3-3zm-3 11H8v-5h8v5zm3-7c-.55 0-1-.45-1-1s.45-1 1-1 1 .45 1 1-.45 1-1 1zm-1-9H6v4h12V3z"/></svg>
<div style="position:absolute;left:506px;top:1197px;width:1956.5px;height:1px;background:#323a4d;"></div>
<span id="r7a" class="t" style="position:absolute;top:1221.00px;font-size:22.9px;line-height:30px;color:#e6eaf2;font-weight:400;white-space:nowrap;letter-spacing:0.178px;-webkit-text-stroke:0.25px #e6eaf2;left:530.4px;">VDA-202601-0009</span>
<span id="r7b" class="t" style="position:absolute;top:1221.00px;font-size:22.9px;line-height:30px;color:#e6eaf2;font-weight:400;white-space:nowrap;letter-spacing:-0.188px;-webkit-text-stroke:0.25px #e6eaf2;left:823.8px;">19/01/2026</span>
<span id="r7c" class="t" style="position:absolute;top:1221.00px;font-size:22.9px;line-height:30px;color:#e6eaf2;font-weight:400;white-space:nowrap;letter-spacing:-0.140px;-webkit-text-stroke:0.25px #e6eaf2;left:1025.8px;">Distribuidora Sul Grãos 126</span>
<span id="r7d" class="t" style="position:absolute;top:1221.00px;font-size:22.9px;line-height:30px;color:#e6eaf2;font-weight:400;white-space:nowrap;letter-spacing:0.134px;-webkit-text-stroke:0.25px #e6eaf2;right:852.57px;">34,83 kg</span>
<span id="r7e" class="t" style="position:absolute;top:1221.00px;font-size:22.9px;line-height:30px;color:#e6eaf2;font-weight:400;white-space:nowrap;letter-spacing:-0.468px;-webkit-text-stroke:0.25px #e6eaf2;right:613.77px;">R$ 172.584,07</span>
<div style="position:absolute;left:1994px;top:1216px;width:131px;height:41.5px;background:#2e4d5d;border-radius:21px;"></div>
<span id="r7f" class="t" style="position:absolute;top:1224.10px;font-size:18.9px;line-height:25px;color:#5db2e6;font-weight:400;white-space:nowrap;letter-spacing:0.238px;-webkit-text-stroke:0.3px #5db2e6;left:2059.6px;transform:translateX(-50%);margin-left:0.12px;">Reservada</span>
<svg style="position:absolute;left:2226.70px;top:1222.90px;" width="27.6" height="27.6" viewBox="0 0 24 24" fill="#f1f3f8"><path d="M12 4.5C7 4.5 2.73 7.61 1 12c1.73 4.39 6 7.5 11 7.5s9.27-3.11 11-7.5c-1.73-4.39-6-7.5-11-7.5zM12 17c-2.76 0-5-2.24-5-5s2.24-5 5-5 5 2.24 5 5-2.24 5-5 5zm0-8c-1.66 0-3 1.34-3 3s1.34 3 3 3 3-1.34 3-3-1.34-3-3-3z"/></svg>
<svg style="position:absolute;left:2286.90px;top:1223.30px;" width="27.4" height="27.4" viewBox="0 0 24 24" fill="#5fd36f"><path d="M19 8H5c-1.66 0-3 1.34-3 3v6h4v4h12v-4h4v-6c0-1.66-1.34-3-3-3zm-3 11H8v-5h8v5zm3-7c-.55 0-1-.45-1-1s.45-1 1-1 1 .45 1 1-.45 1-1 1zm-1-9H6v4h12V3z"/></svg>
<svg style="position:absolute;left:2347.80px;top:1227.90px" width="25.2" height="18.2" viewBox="0 0 555 400"><g fill="#5fd36f"><path d="M7 50Q7 5 50 5H400V102H475L547 195V320H7z"/><circle cx="132" cy="323" r="75"/><circle cx="420" cy="323" r="75"/></g><g fill="#222839"><circle cx="132" cy="323" r="36"/><circle cx="420" cy="323" r="36"/><path d="M85 130H235V175H85z"/><path d="M232 60L322 152L232 242z"/><path d="M400 142H462L503 198H400z"/></g></svg>
<div style="position:absolute;left:506px;top:1275px;width:1956.5px;height:1px;background:#323a4d;"></div>
<span id="r8a" class="t" style="position:absolute;top:1299.00px;font-size:22.9px;line-height:30px;color:#e6eaf2;font-weight:400;white-space:nowrap;letter-spacing:-0.122px;-webkit-text-stroke:0.25px #e6eaf2;left:530.4px;">VDA-202601-0010</span>
<span id="r8b" class="t" style="position:absolute;top:1299.00px;font-size:22.9px;line-height:30px;color:#e6eaf2;font-weight:400;white-space:nowrap;letter-spacing:-0.188px;-webkit-text-stroke:0.25px #e6eaf2;left:823.8px;">19/01/2026</span>
<span id="r8c" class="t" style="position:absolute;top:1299.00px;font-size:22.9px;line-height:30px;color:#e6eaf2;font-weight:400;white-space:nowrap;letter-spacing:-0.194px;-webkit-text-stroke:0.25px #e6eaf2;left:1025.8px;">Exportadora Global Grãos S.A. 100</span>
<span id="r8d" class="t" style="position:absolute;top:1299.00px;font-size:22.9px;line-height:30px;color:#e6eaf2;font-weight:400;white-space:nowrap;letter-spacing:0.059px;-webkit-text-stroke:0.25px #e6eaf2;right:852.64px;">23,38 kg</span>
<span id="r8e" class="t" style="position:absolute;top:1299.00px;font-size:22.9px;line-height:30px;color:#e6eaf2;font-weight:400;white-space:nowrap;letter-spacing:-0.700px;-webkit-text-stroke:0.25px #e6eaf2;right:614.00px;">R$ 115.883,77</span>
<div style="position:absolute;left:1994px;top:1294px;width:119px;height:41.5px;background:#2e4f48;border-radius:21px;"></div>
<span id="r8f" class="t" style="position:absolute;top:1302.10px;font-size:18.9px;line-height:25px;color:#6bdc7c;font-weight:400;white-space:nowrap;letter-spacing:0.340px;-webkit-text-stroke:0.3px #6bdc7c;left:2053.5px;transform:translateX(-50%);margin-left:0.17px;">Expedida</span>
<svg style="position:absolute;left:2226.70px;top:1300.90px;" width="27.6" height="27.6" viewBox="0 0 24 24" fill="#f1f3f8"><path d="M12 4.5C7 4.5 2.73 7.61 1 12c1.73 4.39 6 7.5 11 7.5s9.27-3.11 11-7.5c-1.73-4.39-6-7.5-11-7.5zM12 17c-2.76 0-5-2.24-5-5s2.24-5 5-5 5 2.24 5 5-2.24 5-5 5zm0-8c-1.66 0-3 1.34-3 3s1.34 3 3 3 3-1.34 3-3-1.34-3-3-3z"/></svg>
<svg style="position:absolute;left:2286.90px;top:1301.30px;" width="27.4" height="27.4" viewBox="0 0 24 24" fill="#5fd36f"><path d="M19 8H5c-1.66 0-3 1.34-3 3v6h4v4h12v-4h4v-6c0-1.66-1.34-3-3-3zm-3 11H8v-5h8v5zm3-7c-.55 0-1-.45-1-1s.45-1 1-1 1 .45 1 1-.45 1-1 1zm-1-9H6v4h12V3z"/></svg>
<div style="position:absolute;left:506px;top:1353px;width:1956.5px;height:1px;background:#323a4d;"></div>
<span id="r9a" class="t" style="position:absolute;top:1377.00px;font-size:22.9px;line-height:30px;color:#e6eaf2;font-weight:400;white-space:nowrap;letter-spacing:0.052px;-webkit-text-stroke:0.25px #e6eaf2;left:530.4px;">VDA-202601-0007</span>
<span id="r9b" class="t" style="position:absolute;top:1377.00px;font-size:22.9px;line-height:30px;color:#e6eaf2;font-weight:400;white-space:nowrap;letter-spacing:-0.188px;-webkit-text-stroke:0.25px #e6eaf2;left:823.8px;">16/01/2026</span>
<span id="r9c" class="t" style="position:absolute;top:1377.00px;font-size:22.9px;line-height:30px;color:#e6eaf2;font-weight:400;white-space:nowrap;letter-spacing:-0.171px;-webkit-text-stroke:0.25px #e6eaf2;left:1025.8px;">Distribuidora Sul Grãos 12</span>
<span id="r9d" class="t" style="position:absolute;top:1377.00px;font-size:22.9px;line-height:30px;color:#e6eaf2;font-weight:400;white-space:nowrap;letter-spacing:0.134px;-webkit-text-stroke:0.25px #e6eaf2;right:852.57px;">32,93 kg</span>
<span id="r9e" class="t" style="position:absolute;top:1377.00px;font-size:22.9px;line-height:30px;color:#e6eaf2;font-weight:400;white-space:nowrap;letter-spacing:-0.299px;-webkit-text-stroke:0.25px #e6eaf2;right:613.60px;">R$ 139.506,64</span>
<div style="position:absolute;left:1994px;top:1372px;width:131px;height:41.5px;background:#2e4d5d;border-radius:21px;"></div>
<span id="r9f" class="t" style="position:absolute;top:1380.10px;font-size:18.9px;line-height:25px;color:#5db2e6;font-weight:400;white-space:nowrap;letter-spacing:0.238px;-webkit-text-stroke:0.3px #5db2e6;left:2059.6px;transform:translateX(-50%);margin-left:0.12px;">Reservada</span>
<svg style="position:absolute;left:2226.70px;top:1378.90px;" width="27.6" height="27.6" viewBox="0 0 24 24" fill="#f1f3f8"><path d="M12 4.5C7 4.5 2.73 7.61 1 12c1.73 4.39 6 7.5 11 7.5s9.27-3.11 11-7.5c-1.73-4.39-6-7.5-11-7.5zM12 17c-2.76 0-5-2.24-5-5s2.24-5 5-5 5 2.24 5 5-2.24 5-5 5zm0-8c-1.66 0-3 1.34-3 3s1.34 3 3 3 3-1.34 3-3-1.34-3-3-3z"/></svg>
<svg style="position:absolute;left:2286.90px;top:1379.30px;" width="27.4" height="27.4" viewBox="0 0 24 24" fill="#5fd36f"><path d="M19 8H5c-1.66 0-3 1.34-3 3v6h4v4h12v-4h4v-6c0-1.66-1.34-3-3-3zm-3 11H8v-5h8v5zm3-7c-.55 0-1-.45-1-1s.45-1 1-1 1 .45 1 1-.45 1-1 1zm-1-9H6v4h12V3z"/></svg>
<svg style="position:absolute;left:2347.80px;top:1383.90px" width="25.2" height="18.2" viewBox="0 0 555 400"><g fill="#5fd36f"><path d="M7 50Q7 5 50 5H400V102H475L547 195V320H7z"/><circle cx="132" cy="323" r="75"/><circle cx="420" cy="323" r="75"/></g><g fill="#222839"><circle cx="132" cy="323" r="36"/><circle cx="420" cy="323" r="36"/><path d="M85 130H235V175H85z"/><path d="M232 60L322 152L232 242z"/><path d="M400 142H462L503 198H400z"/></g></svg>
<div style="position:absolute;left:506px;top:1431px;width:1956.5px;height:1px;background:#323a4d;"></div>
<span id="r10a" class="t" style="position:absolute;top:1455.00px;font-size:22.9px;line-height:30px;color:#e6eaf2;font-weight:400;white-space:nowrap;letter-spacing:0.178px;-webkit-text-stroke:0.25px #e6eaf2;left:530.4px;">VDA-202601-0008</span>
<span id="r10b" class="t" style="position:absolute;top:1455.00px;font-size:22.9px;line-height:30px;color:#e6eaf2;font-weight:400;white-space:nowrap;letter-spacing:-0.188px;-webkit-text-stroke:0.25px #e6eaf2;left:823.8px;">16/01/2026</span>
<span id="r10c" class="t" style="position:absolute;top:1455.00px;font-size:22.9px;line-height:30px;color:#e6eaf2;font-weight:400;white-space:nowrap;letter-spacing:-0.118px;-webkit-text-stroke:0.25px #e6eaf2;left:1025.8px;">Moinho Central Ltda 134</span>
<span id="r10d" class="t" style="position:absolute;top:1455.00px;font-size:22.9px;line-height:30px;color:#e6eaf2;font-weight:400;white-space:nowrap;letter-spacing:-0.616px;-webkit-text-stroke:0.25px #e6eaf2;right:853.32px;">32,18 kg</span>
<span id="r10e" class="t" style="position:absolute;top:1455.00px;font-size:22.9px;line-height:30px;color:#e6eaf2;font-weight:400;white-space:nowrap;letter-spacing:-0.345px;-webkit-text-stroke:0.25px #e6eaf2;right:613.65px;">R$ 199.896,53</span>
<div style="position:absolute;left:1994px;top:1450px;width:119px;height:41.5px;background:#2e4f48;border-radius:21px;"></div>
<span id="r10f" class="t" style="position:absolute;top:1458.10px;font-size:18.9px;line-height:25px;color:#6bdc7c;font-weight:400;white-space:nowrap;letter-spacing:0.340px;-webkit-text-stroke:0.3px #6bdc7c;left:2053.5px;transform:translateX(-50%);margin-left:0.17px;">Expedida</span>
<svg style="position:absolute;left:2226.70px;top:1456.90px;" width="27.6" height="27.6" viewBox="0 0 24 24" fill="#f1f3f8"><path d="M12 4.5C7 4.5 2.73 7.61 1 12c1.73 4.39 6 7.5 11 7.5s9.27-3.11 11-7.5c-1.73-4.39-6-7.5-11-7.5zM12 17c-2.76 0-5-2.24-5-5s2.24-5 5-5 5 2.24 5 5-2.24 5-5 5zm0-8c-1.66 0-3 1.34-3 3s1.34 3 3 3 3-1.34 3-3-1.34-3-3-3z"/></svg>
<svg style="position:absolute;left:2286.90px;top:1457.30px;" width="27.4" height="27.4" viewBox="0 0 24 24" fill="#5fd36f"><path d="M19 8H5c-1.66 0-3 1.34-3 3v6h4v4h12v-4h4v-6c0-1.66-1.34-3-3-3zm-3 11H8v-5h8v5zm3-7c-.55 0-1-.45-1-1s.45-1 1-1 1 .45 1 1-.45 1-1 1zm-1-9H6v4h12V3z"/></svg>
<div style="position:absolute;left:506px;top:1509px;width:1956.5px;height:1px;background:#323a4d;"></div>
<span id="r11a" class="t" style="position:absolute;top:1533.00px;font-size:22.9px;line-height:30px;color:#e6eaf2;font-weight:400;white-space:nowrap;letter-spacing:0.178px;-webkit-text-stroke:0.25px #e6eaf2;left:530.4px;">VDA-202601-0006</span>
<span id="r11b" class="t" style="position:absolute;top:1533.00px;font-size:22.9px;line-height:30px;color:#e6eaf2;font-weight:400;white-space:nowrap;letter-spacing:-0.258px;-webkit-text-stroke:0.25px #e6eaf2;left:823.8px;">15/01/2026</span>
<span id="r11c" class="t" style="position:absolute;top:1533.00px;font-size:22.9px;line-height:30px;color:#e6eaf2;font-weight:400;white-space:nowrap;letter-spacing:-0.254px;-webkit-text-stroke:0.25px #e6eaf2;left:1025.8px;">Agroindústria ABC Ltda 161</span>
<span id="r11d" class="t" style="position:absolute;top:1533.00px;font-size:22.9px;line-height:30px;color:#e6eaf2;font-weight:400;white-space:nowrap;letter-spacing:-0.191px;-webkit-text-stroke:0.25px #e6eaf2;right:852.89px;">35,78 kg</span>
<span id="r11e" class="t" style="position:absolute;top:1533.00px;font-size:22.9px;line-height:30px;color:#e6eaf2;font-weight:400;white-space:nowrap;letter-spacing:-0.514px;-webkit-text-stroke:0.25px #e6eaf2;right:613.81px;">R$ 156.056,07</span>
<div style="position:absolute;left:1994px;top:1528px;width:119px;height:41.5px;background:#2e4f48;border-radius:21px;"></div>
<span id="r11f" class="t" style="position:absolute;top:1536.10px;font-size:18.9px;line-height:25px;color:#6bdc7c;font-weight:400;white-space:nowrap;letter-spacing:0.340px;-webkit-text-stroke:0.3px #6bdc7c;left:2053.5px;transform:translateX(-50%);margin-left:0.17px;">Expedida</span>
<svg style="position:absolute;left:2226.70px;top:1534.90px;" width="27.6" height="27.6" viewBox="0 0 24 24" fill="#f1f3f8"><path d="M12 4.5C7 4.5 2.73 7.61 1 12c1.73 4.39 6 7.5 11 7.5s9.27-3.11 11-7.5c-1.73-4.39-6-7.5-11-7.5zM12 17c-2.76 0-5-2.24-5-5s2.24-5 5-5 5 2.24 5 5-2.24 5-5 5zm0-8c-1.66 0-3 1.34-3 3s1.34 3 3 3 3-1.34 3-3-1.34-3-3-3z"/></svg>
<svg style="position:absolute;left:2286.90px;top:1535.30px;" width="27.4" height="27.4" viewBox="0 0 24 24" fill="#5fd36f"><path d="M19 8H5c-1.66 0-3 1.34-3 3v6h4v4h12v-4h4v-6c0-1.66-1.34-3-3-3zm-3 11H8v-5h8v5zm3-7c-.55 0-1-.45-1-1s.45-1 1-1 1 .45 1 1-.45 1-1 1zm-1-9H6v4h12V3z"/></svg>
<div style="position:absolute;left:506px;top:1587px;width:1956.5px;height:1px;background:#323a4d;"></div>
<div style="position:absolute;left:2549px;top:0px;width:10px;height:1599px;background:#fdfefe;"></div>
<div style="position:absolute;left:2552.3px;top:2px;width:7px;height:1276px;background:linear-gradient(180deg,#70e081 0%,#60d06f 35%,#52bb5f 70%,#44a64f 100%);border-radius:3.5px;"></div>
<div style="position:absolute;left:0px;top:1569px;width:180px;height:30px;background:#000;border-top-right-radius:6px;"></div>
<span id="url" class="t" style="position:absolute;top:1574.50px;font-size:17.5px;line-height:23px;color:#ffffff;font-weight:400;white-space:nowrap;letter-spacing:0.021px;left:8px;">localhost:5173/sales</span>
</div></body></html>
